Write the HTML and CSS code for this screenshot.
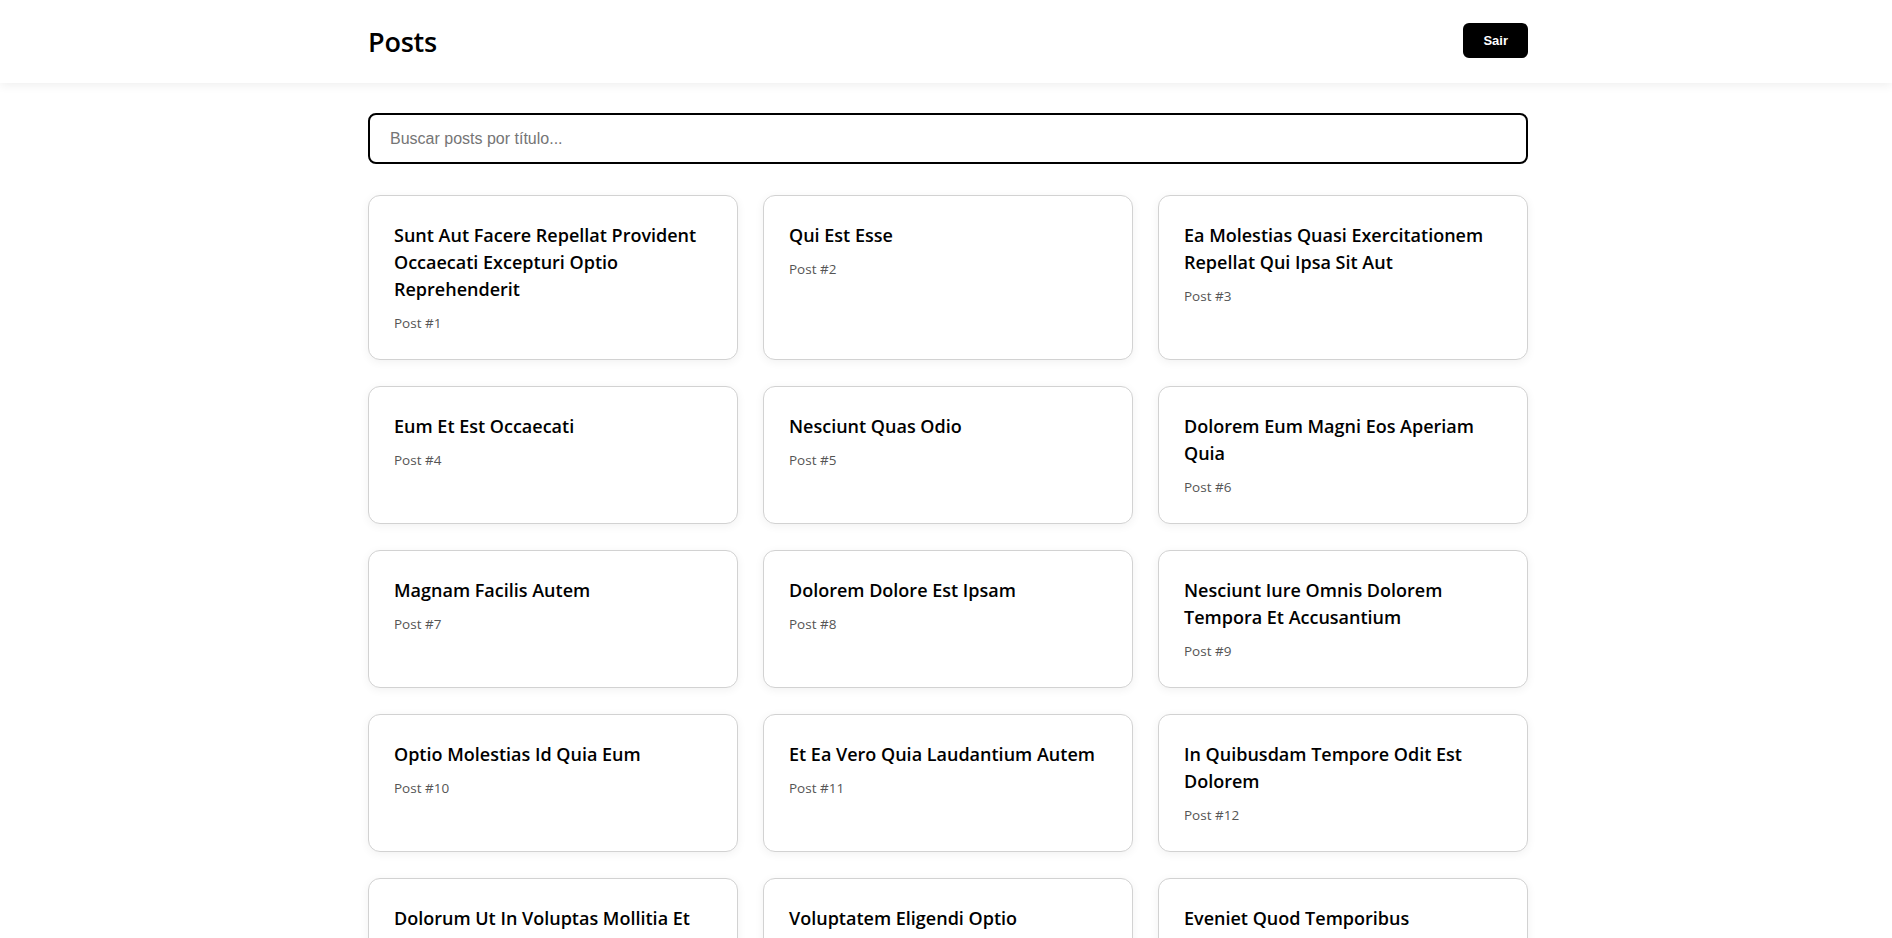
FILE: index.html
```html
<!DOCTYPE html>
<html lang="pt-BR">
<head>
<meta charset="utf-8">
<title>Posts</title>
<link rel="stylesheet" href="styles.css">
</head>
<body>
<header class="topbar">
  <div class="container topbar-inner">
    <h1 class="page-title">Posts</h1>
    <button class="btn-logout" type="button">Sair</button>
  </div>
</header>
<main class="container main">
  <input class="search" type="text" placeholder="Buscar posts por título...">
  <div class="grid">
    <article class="card"><h3 class="card-title">Sunt Aut Facere Repellat Provident Occaecati Excepturi Optio Reprehenderit</h3><p class="card-meta">Post #1</p></article>
    <article class="card"><h3 class="card-title">Qui Est Esse</h3><p class="card-meta">Post #2</p></article>
    <article class="card"><h3 class="card-title">Ea Molestias Quasi Exercitationem Repellat Qui Ipsa Sit Aut</h3><p class="card-meta">Post #3</p></article>
    <article class="card"><h3 class="card-title">Eum Et Est Occaecati</h3><p class="card-meta">Post #4</p></article>
    <article class="card"><h3 class="card-title">Nesciunt Quas Odio</h3><p class="card-meta">Post #5</p></article>
    <article class="card"><h3 class="card-title">Dolorem Eum Magni Eos Aperiam Quia</h3><p class="card-meta">Post #6</p></article>
    <article class="card"><h3 class="card-title">Magnam Facilis Autem</h3><p class="card-meta">Post #7</p></article>
    <article class="card"><h3 class="card-title">Dolorem Dolore Est Ipsam</h3><p class="card-meta">Post #8</p></article>
    <article class="card"><h3 class="card-title">Nesciunt Iure Omnis Dolorem Tempora Et Accusantium</h3><p class="card-meta">Post #9</p></article>
    <article class="card"><h3 class="card-title">Optio Molestias Id Quia Eum</h3><p class="card-meta">Post #10</p></article>
    <article class="card"><h3 class="card-title">Et Ea Vero Quia Laudantium Autem</h3><p class="card-meta">Post #11</p></article>
    <article class="card"><h3 class="card-title">In Quibusdam Tempore Odit Est Dolorem</h3><p class="card-meta">Post #12</p></article>
    <article class="card"><h3 class="card-title">Dolorum Ut In Voluptas Mollitia Et Saepe Quo Animi</h3><p class="card-meta">Post #13</p></article>
    <article class="card"><h3 class="card-title">Voluptatem Eligendi Optio</h3><p class="card-meta">Post #14</p></article>
    <article class="card"><h3 class="card-title">Eveniet Quod Temporibus</h3><p class="card-meta">Post #15</p></article>
    <article class="card"><h3 class="card-title">Sint Suscipit Perspiciatis Velit Dolorum Rerum Ipsa Laboriosam Odio</h3><p class="card-meta">Post #16</p></article>
    <article class="card"><h3 class="card-title">Fugit Voluptas Sed Molestias Voluptatem Provident</h3><p class="card-meta">Post #17</p></article>
    <article class="card"><h3 class="card-title">Voluptate Et Itaque Vero Tempora Molestiae</h3><p class="card-meta">Post #18</p></article>
  </div>
</main>
</body>
</html>
```
FILE: styles.css
```css
* { box-sizing: border-box; }

html, body {
  margin: 0;
  padding: 0;
  background: #ffffff;
  font-family: "Open Sans", "Noto Sans", sans-serif;
  color: #000;
}

.container {
  width: 1160px;
  margin-left: calc(50% - 578px);
}

.topbar {
  background: #fff;
  height: 83px;
  box-shadow: 0 2px 10px rgba(0, 0, 0, 0.07);
  position: relative;
  z-index: 1;
}

.topbar-inner {
  height: 100%;
  display: flex;
  align-items: center;
  justify-content: space-between;
  padding-top: 1px;
}

.page-title {
  margin: 0;
  font-size: 27px;
  font-weight: 600;
  line-height: 36px;
  letter-spacing: -0.2px;
}

.btn-logout {
  background: #000;
  color: #fff;
  border: none;
  border-radius: 6px;
  font-family: "Liberation Sans", Arial, sans-serif;
  font-size: 13px;
  font-weight: 700;
  line-height: 17px;
  padding: 9px 20px;
  margin-top: -3px;
  cursor: pointer;
}

.main {
  padding-top: 30px;
  padding-bottom: 40px;
}

.search {
  display: block;
  width: 100%;
  height: 51px;
  border: 2px solid #000;
  border-radius: 8px;
  padding: 0 20px;
  font-family: "Liberation Sans", Arial, sans-serif;
  font-size: 16px;
  color: #000;
  background: #fff;
  outline: none;
  margin: 0 0 31px;
}

.search::placeholder {
  color: #757575;
}

.grid {
  display: grid;
  grid-template-columns: repeat(3, 1fr);
  column-gap: 25px;
  row-gap: 26px;
}

.card {
  background: #fff;
  border: 1px solid #d2d2d2;
  border-radius: 12px;
  padding: 26px 25px 25px;
  box-shadow: 0 2px 10px rgba(0, 0, 0, 0.06);
}

.card-title {
  margin: 0 0 10px;
  font-size: 18px;
  font-weight: 600;
  line-height: 27px;
  color: #000;
}

.card-meta {
  margin: 0;
  font-size: 13.5px;
  line-height: 21px;
  color: #555;
}
```
